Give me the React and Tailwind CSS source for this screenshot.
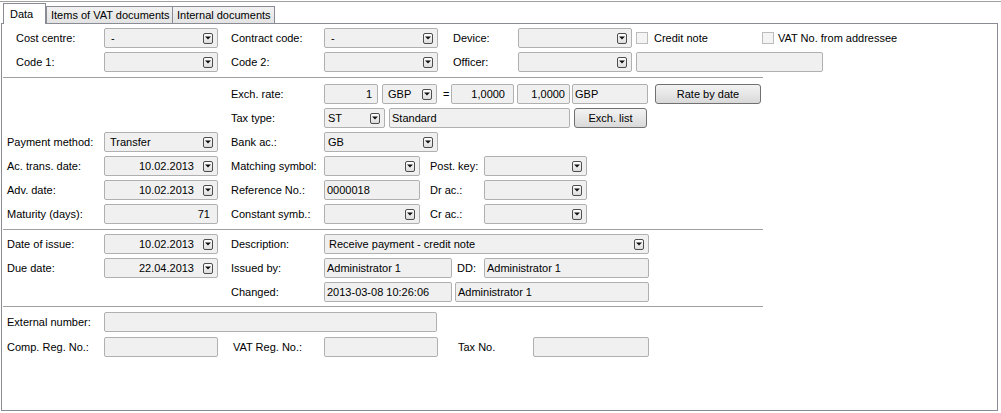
import React from "react"

function Arrow() {
  return (
    <span className="flex h-[11px] w-[10px] shrink-0 items-center justify-center rounded-[2px] border border-[#4d4d4d] bg-gradient-to-b from-white to-[#dcdcdc]">
      <svg width="6" height="4" viewBox="0 0 6 4"><path d="M0 0.5h6L3 3.5z" fill="#111" /></svg>
    </span>
  )
}

function Label({ className = "", children }) {
  return <span className={"shrink-0 whitespace-nowrap " + className}>{children}</span>
}

function Box({ className = "", children, right }) {
  return (
    <span className={"flex h-[20px] shrink-0 items-center overflow-hidden whitespace-nowrap rounded-[2px] border border-[#b0b0b0] bg-[#f0f0f0] " + (right ? "justify-end " : "") + className}>
      {children}
    </span>
  )
}

function Combo({ className = "", children, right, pad = "pl-[5px]" }) {
  return (
    <span className={"flex h-[20px] shrink-0 items-center rounded-[2px] border border-[#b0b0b0] bg-[#f0f0f0] pr-[4px] " + className}>
      <span className={"flex-1 overflow-hidden whitespace-nowrap " + (right ? "pr-[9px] text-right" : pad)}>{children}</span>
      <Arrow />
    </span>
  )
}

function Check({ className = "" }) {
  return <span className={"h-[12px] w-[12px] shrink-0 border border-[#bcbcbc] bg-[#f4f4f4] " + className} />
}

function Btn({ className = "", children }) {
  return (
    <span className={"flex h-[20px] shrink-0 items-center justify-center rounded-[3px] border border-[#707070] bg-gradient-to-b from-[#f3f3f3] to-[#d9d9d9] " + className}>
      {children}
    </span>
  )
}

function Row({ className = "", children }) {
  return <div className={"flex h-[20px] items-center " + className}>{children}</div>
}

function Sep({ className = "" }) {
  return <div className={"ml-[1px] h-px w-[760px] bg-[#a0a0a0] " + className} />
}

export default function App() {
  return (
    <div className="h-[413px] w-[1001px] overflow-hidden bg-white font-['Liberation_Sans',Arial,sans-serif] text-[11px] leading-none text-black">
      <div className="mt-[1px] h-px w-full bg-[#a0a0a0]" />
      {/* tabs */}
      <div className="relative z-10 mt-[1px] flex h-[20px] items-end pl-[3px]">
        <div className="-mb-px flex h-[21px] w-[43px] items-start border border-b-0 border-[#898c95] bg-white pl-[6px] pt-[5px]">Data</div>
        <div className="flex h-[17px] w-[127px] items-center border border-b-0 border-[#898c95] bg-gradient-to-b from-[#f2f2f2] to-[#e3e3e3] pl-[4px]">Items of VAT documents</div>
        <div className="-ml-px flex h-[17px] w-[103px] items-center border border-b-0 border-[#898c95] bg-gradient-to-b from-[#f2f2f2] to-[#e3e3e3] pl-[4px]">Internal documents</div>
      </div>

      {/* panel */}
      <div className="ml-[1px] h-[388px] w-[997px] border border-[#898c95] pt-[4px]">
        <div className="flex flex-col gap-[4px]">
          <Row>
            <Label className="ml-[14px] w-[88px]">Cost centre:</Label>
            <Combo className="w-[114px]" pad="pl-[6px]">-</Combo>
            <Label className="ml-[13px] w-[93px]">Contract code:</Label>
            <Combo className="w-[114px]" pad="pl-[6px]">-</Combo>
            <Label className="ml-[15px] w-[65px]">Device:</Label>
            <Combo className="w-[114px]" />
            <Check className="ml-[4px]" />
            <Label className="ml-[6px] w-[108px]">Credit note</Label>
            <Check />
            <Label className="ml-[4px]">VAT No. from addressee</Label>
          </Row>
          <Row>
            <Label className="ml-[14px] w-[88px]">Code 1:</Label>
            <Combo className="w-[114px]" />
            <Label className="ml-[13px] w-[93px]">Code 2:</Label>
            <Combo className="w-[114px]" />
            <Label className="ml-[15px] w-[65px]">Officer:</Label>
            <Combo className="w-[114px]" />
            <Box className="ml-[4px] w-[187px]" />
          </Row>
        </div>

        <Sep className="mt-[5px]" />

        <div className="mt-[6px] flex flex-col gap-[4px]">
          <Row>
            <Label className="ml-[229px] w-[93px]">Exch. rate:</Label>
            <Box right className="w-[54px] pr-[5px]">1</Box>
            <Combo className="ml-[4px] w-[55px]" pad="pl-[5px]">GBP</Combo>
            <Label className="ml-[6px] w-[8px]">=</Label>
            <Box right className="w-[63px] pr-[8px]">1,0000</Box>
            <Box right className="ml-[3px] w-[53px] pr-[4px]">1,0000</Box>
            <Box className="ml-[2px] w-[76px] pl-[2px]">GBP</Box>
            <Btn className="ml-[7px] w-[106px]">Rate by date</Btn>
          </Row>
          <Row>
            <Label className="ml-[229px] w-[93px]">Tax type:</Label>
            <Combo className="w-[61px]" pad="pl-[3px]">ST</Combo>
            <Box className="ml-[4px] w-[181px] pl-[2px]">Standard</Box>
            <Btn className="ml-[4px] w-[73px]">Exch. list</Btn>
          </Row>
          <Row>
            <Label className="ml-[5px] w-[97px]">Payment method:</Label>
            <Combo className="w-[114px]">Transfer</Combo>
            <Label className="ml-[13px] w-[93px]">Bank ac.:</Label>
            <Combo className="w-[114px]" pad="pl-[3px]">GB</Combo>
          </Row>
          <Row>
            <Label className="ml-[5px] w-[97px]">Ac. trans. date:</Label>
            <Combo right className="w-[114px]">10.02.2013</Combo>
            <Label className="ml-[13px] w-[93px]">Matching symbol:</Label>
            <Combo className="w-[96px]" />
            <Label className="ml-[10px] w-[54px]">Post. key:</Label>
            <Combo className="w-[103px]" />
          </Row>
          <Row>
            <Label className="ml-[5px] w-[97px]">Adv. date:</Label>
            <Combo right className="w-[114px]">10.02.2013</Combo>
            <Label className="ml-[13px] w-[93px]">Reference No.:</Label>
            <Box className="w-[96px] pl-[2px]">0000018</Box>
            <Label className="ml-[10px] w-[54px]">Dr ac.:</Label>
            <Combo className="w-[103px]" />
          </Row>
          <Row>
            <Label className="ml-[5px] w-[97px]">Maturity (days):</Label>
            <Box right className="w-[114px] pr-[7px]">71</Box>
            <Label className="ml-[13px] w-[93px]">Constant symb.:</Label>
            <Combo className="w-[96px]" />
            <Label className="ml-[10px] w-[54px]">Cr ac.:</Label>
            <Combo className="w-[103px]" />
          </Row>
        </div>

        <Sep className="mt-[5px]" />

        <div className="mt-[4px] flex flex-col gap-[4px]">
          <Row>
            <Label className="ml-[5px] w-[97px]">Date of issue:</Label>
            <Combo right className="w-[114px]">10.02.2013</Combo>
            <Label className="ml-[13px] w-[93px]">Description:</Label>
            <Combo className="w-[325px]" pad="pl-[4px]">Receive payment - credit note</Combo>
          </Row>
          <Row>
            <Label className="ml-[5px] w-[97px]">Due date:</Label>
            <Combo right className="w-[114px]">22.04.2013</Combo>
            <Label className="ml-[13px] w-[93px]">Issued by:</Label>
            <Box className="w-[128px] pl-[2px]">Administrator 1</Box>
            <Label className="ml-[5px] w-[27px]">DD:</Label>
            <Box className="w-[165px] pl-[2px]">Administrator 1</Box>
          </Row>
          <Row>
            <Label className="ml-[229px] w-[93px]">Changed:</Label>
            <Box className="w-[128px] pl-[2px]">2013-03-08 10:26:06</Box>
            <Box className="ml-[3px] w-[194px] pl-[2px]">Administrator 1</Box>
          </Row>
        </div>

        <Sep className="mt-[4px]" />

        <div className="mt-[5px] flex flex-col gap-[5px]">
          <Row>
            <Label className="ml-[5px] w-[97px]">External number:</Label>
            <Box className="w-[333px]" />
          </Row>
          <Row>
            <Label className="ml-[5px] w-[97px]">Comp. Reg. No.:</Label>
            <Box className="w-[114px]" />
            <Label className="ml-[15px] w-[91px]">VAT Reg. No.:</Label>
            <Box className="w-[114px]" />
            <Label className="ml-[20px] w-[75px]">Tax No.</Label>
            <Box className="w-[116px]" />
          </Row>
        </div>
      </div>
    </div>
  )
}
